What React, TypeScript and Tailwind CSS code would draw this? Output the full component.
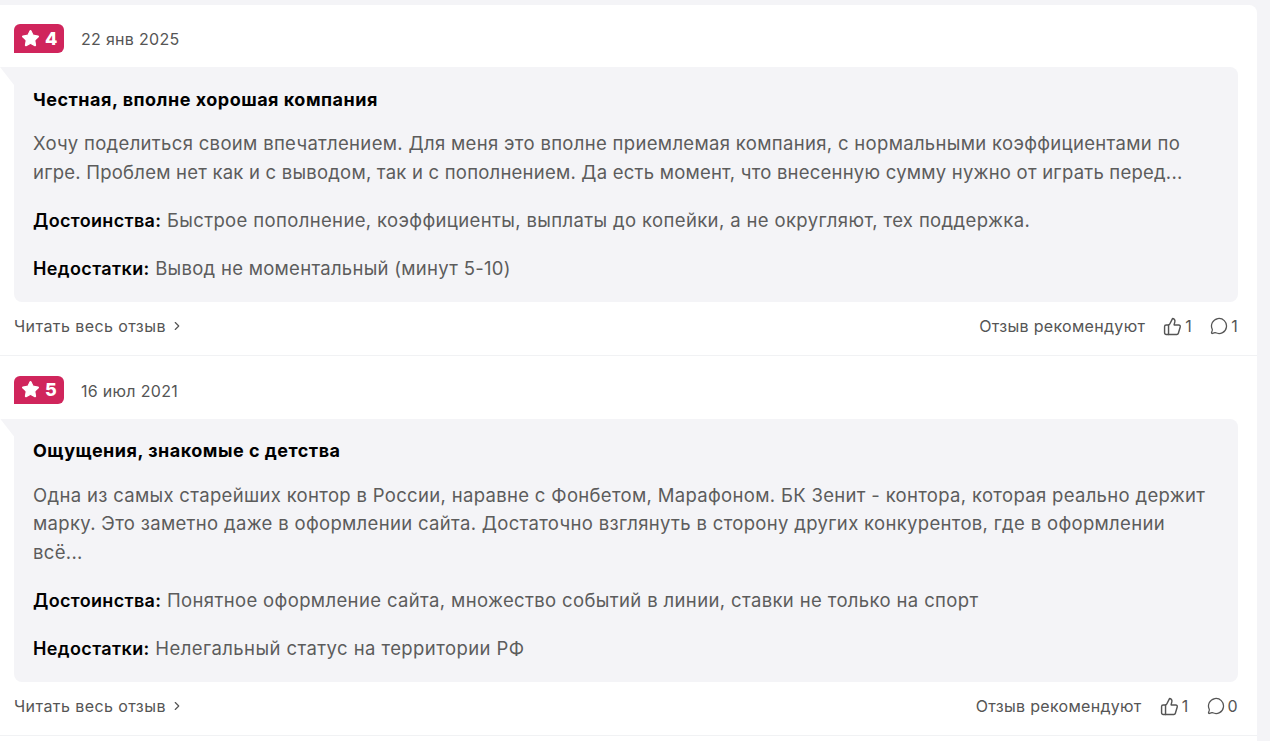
import { ChevronRight, MessageCircle, Star, ThumbsUp } from "lucide-react";

const reviews = [
  {
    score: 4,
    date: "22 янв 2025",
    title: "Честная, вполне хорошая компания",
    lines: [
      { text: "Хочу поделиться своим впечатлением. Для меня это вполне приемлемая компания, с нормальными коэффициентами по", cls: "tracking-[0.32px]" },
      { text: "игре. Проблем нет как и с выводом, так и с пополнением. Да есть момент, что внесенную сумму нужно от играть перед...", cls: "tracking-[0.22px]" },
    ],
    pros: "Быстрое пополнение, коэффициенты, выплаты до копейки, а не округляют, тех поддержка.",
    cons: "Вывод не моментальный (минут 5-10)",
    consCls: "tracking-[0.28px]",
    likes: 1,
    comments: 1,
  },
  {
    score: 5,
    date: "16 июл 2021",
    title: "Ощущения, знакомые с детства",
    lines: [
      { text: "Одна из самых старейших контор в России, наравне с Фонбетом, Марафоном. БК Зенит - контора, которая реально держит", cls: "tracking-[0.32px]" },
      { text: "марку. Это заметно даже в оформлении сайта. Достаточно взглянуть в сторону других конкурентов, где в оформлении", cls: "tracking-[0.32px]" },
      { text: "всё...", cls: "tracking-[0.32px]" },
    ],
    pros: "Понятное оформление сайта, множество событий в линии, ставки не только на спорт",
    cons: "Нелегальный статус на территории РФ",
    consCls: "tracking-[0.42px]",
    likes: 1,
    comments: 0,
  },
];

export default function App() {
  return (
    <main className="h-[741px] overflow-hidden bg-[#f4f4f7] pt-[5px] font-['Inter',sans-serif]">
      <div className="h-full w-[1257px] rounded-tr-lg bg-white">
        {reviews.map((r) => (
          <ReviewCard key={r.date} review={r} />
        ))}
      </div>
    </main>
  );
}

function ReviewCard({ review }: { review: (typeof reviews)[number] }) {
  return (
    <article className="border-b border-[#f1f2f4] pt-[20px] pb-[16.5px] first:pt-[19px]">
      <div className="flex h-[28.5px] items-center pl-[14px]">
        <div className="flex h-[28.5px] w-[50px] items-center gap-[5px] rounded-r-md rounded-tl-md bg-[#d0255c] pl-[7px] text-[18px] font-extrabold text-white">
          <Star className="h-[19px] w-[19px] fill-white" strokeWidth={1.5} />
          {review.score}
        </div>
        <span className="ml-[17px] pt-[2px] text-[16px] tracking-[0.3px] text-[#555]">{review.date}</span>
      </div>

      <div className="relative mt-[14.5px] mr-[19px] ml-[14px] rounded-r-lg rounded-bl-lg bg-[#f4f4f7] px-[19px] pt-[20.5px] pb-[19.5px]">
        <div className="absolute top-0 left-[-14px] h-[18px] w-[14px] bg-[#f4f4f7] [clip-path:polygon(0_0,100%_0,100%_100%)]" />
        <h3 className="text-[18px] leading-[24px] font-bold tracking-[0.5px] text-black">{review.title}</h3>
        <div className="mt-[17.5px] text-[18.5px] leading-[28.8px] text-[#5c5c5c]">
          {review.lines.map((l) => (
            <p key={l.text} className={"whitespace-nowrap " + l.cls}>
              {l.text}
            </p>
          ))}
        </div>
        <p className="mt-[19.2px] text-[18.5px] leading-[28.8px] tracking-[0.36px] text-[#5c5c5c]">
          <b className="text-[18px] leading-none font-semibold tracking-[0.34px] text-black">Достоинства:</b> {review.pros}
        </p>
        <p className={"mt-[19.2px] text-[18.5px] leading-[28.8px] text-[#5c5c5c] " + review.consCls}>
          <b className="text-[18px] leading-none font-semibold tracking-[0.38px] text-black">Недостатки:</b> {review.cons}
        </p>
      </div>

      <div className="mt-[12px] mr-[19px] ml-[14px] flex h-[24px] items-center justify-between text-[16px] tracking-[0.3px] text-[#555]">
        <a className="flex items-center gap-[4px] tracking-[0.42px]">
          Читать весь отзыв
          <ChevronRight className="h-[14px] w-[14px]" strokeWidth={2} />
        </a>
        <div className="flex items-center">
          <span>Отзыв рекомендуют</span>
          <ThumbsUp className="ml-[18px] h-[19px] w-[19px]" strokeWidth={1.8} />
          <span className="ml-[2px] w-[9px] text-center">{review.likes}</span>
          <MessageCircle className="ml-[17px] h-[18px] w-[18px]" strokeWidth={1.7} />
          <span className="ml-[3px]">{review.comments}</span>
        </div>
      </div>
    </article>
  );
}
